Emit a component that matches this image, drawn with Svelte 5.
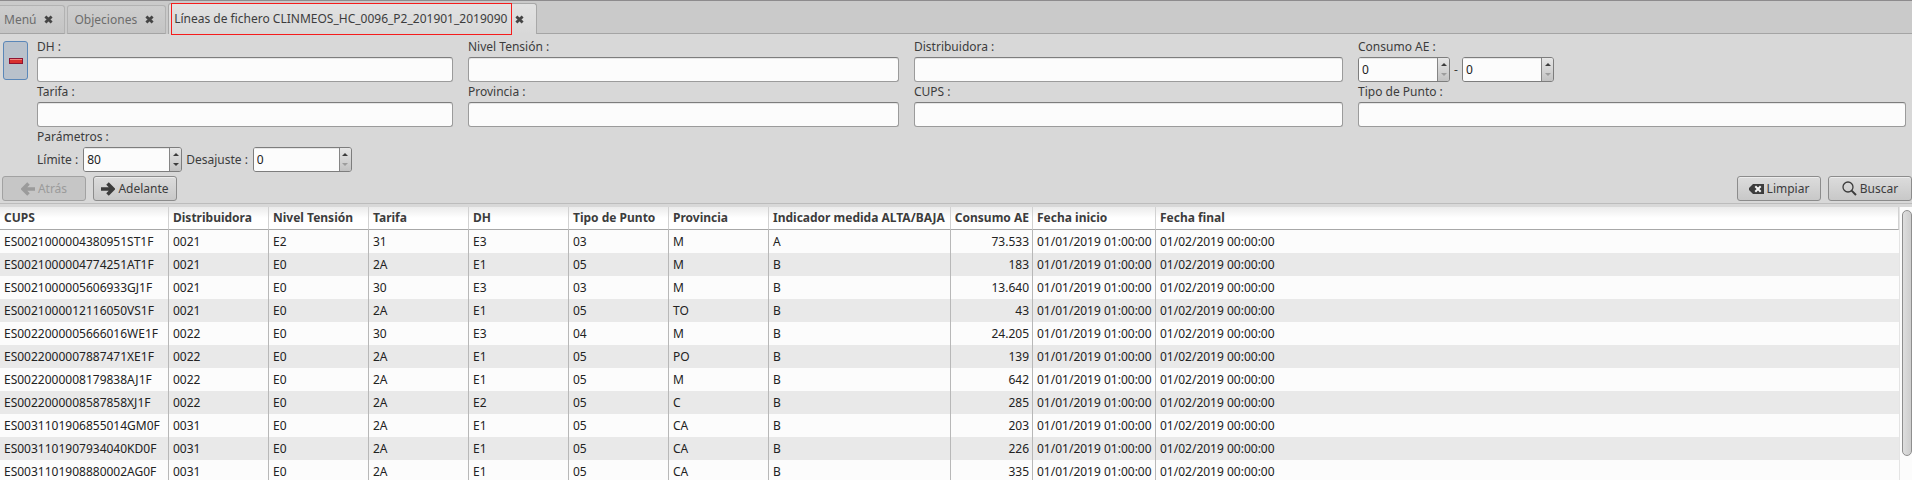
<script>
  const tabs = [
    { label: 'Menú' },
    { label: 'Objeciones' },
    { label: 'Líneas de fichero CLINMEOS_HC_0096_P2_201901_2019090', active: true }
  ];

  const filters = [
    { id: 'dh', label: 'DH :' },
    { id: 'nivel', label: 'Nivel Tensión :' },
    { id: 'distribuidora', label: 'Distribuidora :' },
    { id: 'consumo', label: 'Consumo AE :', range: true },
    { id: 'tarifa', label: 'Tarifa :' },
    { id: 'provincia', label: 'Provincia :' },
    { id: 'cups', label: 'CUPS :' },
    { id: 'tipo', label: 'Tipo de Punto :' }
  ];

  let values = $state({ desde: 0, hasta: 0, limite: 80, desajuste: 0 });

  const columns = [
    { name: 'CUPS', width: 169 },
    { name: 'Distribuidora', width: 100 },
    { name: 'Nivel Tensión', width: 100 },
    { name: 'Tarifa', width: 100 },
    { name: 'DH', width: 100 },
    { name: 'Tipo de Punto', width: 100 },
    { name: 'Provincia', width: 100 },
    { name: 'Indicador medida ALTA/BAJA', width: 182 },
    { name: 'Consumo AE', width: 82 },
    { name: 'Fecha inicio', width: 123 },
    { name: 'Fecha final' }
  ];

  const start = '01/01/2019 01:00:00';
  const end = '01/02/2019 00:00:00';
  const rows = [
    ['ES0021000004380951ST1F', '0021', 'E2', '31', 'E3', '03', 'M', 'A', '73.533'],
    ['ES0021000004774251AT1F', '0021', 'E0', '2A', 'E1', '05', 'M', 'B', '183'],
    ['ES0021000005606933GJ1F', '0021', 'E0', '30', 'E3', '03', 'M', 'B', '13.640'],
    ['ES0021000012116050VS1F', '0021', 'E0', '2A', 'E1', '05', 'TO', 'B', '43'],
    ['ES0022000005666016WE1F', '0022', 'E0', '30', 'E3', '04', 'M', 'B', '24.205'],
    ['ES0022000007887471XE1F', '0022', 'E0', '2A', 'E1', '05', 'PO', 'B', '139'],
    ['ES0022000008179838AJ1F', '0022', 'E0', '2A', 'E1', '05', 'M', 'B', '642'],
    ['ES0022000008587858XJ1F', '0022', 'E0', '2A', 'E2', '05', 'C', 'B', '285'],
    ['ES0031101906855014GM0F', '0031', 'E0', '2A', 'E1', '05', 'CA', 'B', '203'],
    ['ES0031101907934040KD0F', '0031', 'E0', '2A', 'E1', '05', 'CA', 'B', '226'],
    ['ES0031101908880002AG0F', '0031', 'E0', '2A', 'E1', '05', 'CA', 'B', '335']
  ].map((r) => [...r, start, end]);
</script>

{#snippet spin(key, id)}
  <span class="spin" class:wide={key === 'limite' || key === 'desajuste'}>
    <input type="number" min="0" {id} aria-label={key} bind:value={values[key]} />
    <span class="steps">
      <button type="button" aria-label="+" onclick={() => values[key]++}>
        <svg width="6" height="3" viewBox="0 0 6 3"><path d="M3 0 6 3H0z" /></svg>
      </button>
      <button type="button" aria-label="-" disabled={values[key] <= 0} onclick={() => values[key]--}>
        <svg width="6" height="3" viewBox="0 0 6 3"><path d="M0 0H6L3 3z" /></svg>
      </button>
    </span>
  </span>
{/snippet}

<div class="app">
  <div class="tabs">
    {#each tabs as tab}
      <div class="tab" class:active={tab.active}>
        <button type="button" class="name">{tab.label}</button>
        <button type="button" class="close" aria-label="x">
          <svg width="9" height="9" viewBox="0 0 9 9"><path d="M1.4 1.4 7.6 7.6M7.6 1.4 1.4 7.6" /></svg>
        </button>
      </div>
    {/each}
    <div class="fill"></div>
  </div>

  <form class="search" onsubmit={(e) => e.preventDefault()}>
    <button type="button" class="toggle" aria-label="-">
      <svg width="14" height="6" viewBox="0 0 14 6">
        <rect width="14" height="6" fill="#8f1432" />
        <rect x="1" y="1" width="12" height="4" fill="#d8302f" />
        <rect x="1" y="1" width="12" height="1" fill="#ee8580" />
      </svg>
    </button>
    <div class="fields">
      <div class="grid">
        {#each filters as f}
          <div class="field">
            <label for={f.id}>{f.label}</label>
            {#if f.range}
              <div class="range">
                {@render spin('desde', f.id)}
                <span class="dash">-</span>
                {@render spin('hasta', 'hasta')}
              </div>
            {:else}
              <input type="text" id={f.id} />
            {/if}
          </div>
        {/each}
      </div>
      <div class="caption">Parámetros :</div>
      <div class="params">
        <label for="limite">Límite :</label>
        {@render spin('limite', 'limite')}
        <label for="desajuste" class="second">Desajuste :</label>
        {@render spin('desajuste', 'desajuste')}
      </div>
    </div>
  </form>

  <div class="actions">
    <button type="button" class="btn" disabled>
      <svg width="14" height="14" viewBox="0 0 14 14"><path d="M7.5 1.5 2 7l5.500 5.500M2 7h12" fill="none" stroke="currentColor" stroke-width="3.600" /></svg>
      Atrás
    </button>
    <button type="button" class="btn">
      <svg width="14" height="14" viewBox="0 0 14 14"><path d="M6.500 1.500 12 7l-5.500 5.500M12 7H0" fill="none" stroke="currentColor" stroke-width="3.600" /></svg>
      Adelante
    </button>
    <span class="gap"></span>
    <button type="button" class="btn clear">
      <svg width="15" height="10" viewBox="0 0 15 10">
        <path d="M4 0H15V10H4L0 6V4z" fill="currentColor" />
        <path d="M6.300 2.300 11.700 7.700M11.700 2.300 6.300 7.700" stroke="#f4f4f4" stroke-width="2" />
      </svg>
      Limpiar
    </button>
    <button type="button" class="btn">
      <svg width="15" height="15" viewBox="0 0 15 15" fill="none" stroke="currentColor">
        <circle cx="6" cy="6" r="5" stroke-width="1.300" />
        <path d="M9.600 9.600 14 14" stroke-width="2" />
      </svg>
      Buscar
    </button>
  </div>

  <div class="results">
    <div class="view">
      <table>
        <colgroup>
          {#each columns as c}
            <col style:width={c.width ? `${c.width}px` : 'auto'} />
          {/each}
        </colgroup>
        <thead>
          <tr>
            {#each columns as c, i}
              <th class:num={i === 8}>{c.name}</th>
            {/each}
          </tr>
        </thead>
        <tbody>
          {#each rows as r}
            <tr>
              {#each r as cell, i}
                <td class:num={i === 8}>{cell}</td>
              {/each}
            </tr>
          {/each}
        </tbody>
      </table>
    </div>
    <div class="scroll"><div class="thumb"></div></div>
  </div>
</div>

<style>
  :global(body) {
    background: #d8d8d8;
  }
  .app {
    display: flex;
    flex-direction: column;
    height: 100vh;
    overflow: hidden;
    box-sizing: border-box;
    border-top: 1px solid #8d8b8d;
    background: #d8d8d8;
    color: #3c3c3c;
    font: 12px/16px 'Noto Sans', sans-serif;
  }
  .app * {
    box-sizing: border-box;
  }
  button,
  input {
    margin: 0;
    font: inherit;
    color: inherit;
  }
  svg {
    display: block;
    flex: none;
  }

  .tabs {
    display: flex;
    align-items: flex-end;
    flex: none;
    height: 33px;
    background: #cacaca;
  }
  .tab {
    display: flex;
    align-items: center;
    gap: 8px;
    height: 29px;
    margin-right: 2px;
    padding: 0 11px 0 6px;
    border: 1px solid #b2b2b2;
    border-bottom-color: #a4a4a4;
    border-radius: 3px 3px 0 0;
    background: linear-gradient(#cecece, #c4c4c4);
    color: #6c6c6c;
    white-space: nowrap;
  }
  .tab:first-child {
    padding-left: 4px;
    border-left: 0;
    border-top-left-radius: 0;
  }
  .tab.active {
    height: 31px;
    margin-right: 0;
    padding: 0 12px 0 2px;
    gap: 3px;
    border-color: #a8a8a8;
    border-bottom: 0;
    background: linear-gradient(#e2e2e2, #d8d8d8);
    color: #3c3c3c;
  }
  .tab button {
    padding: 0;
    border: 0;
    background: none;
  }
  .tab.active .name {
    height: 32px;
    padding: 0 4px 1px 2px;
    border: 1px solid #f51c1c;
  }
  .close path {
    stroke: #454545;
    stroke-width: 2.8;
  }
  .fill {
    flex: 1;
    align-self: stretch;
    border-bottom: 1px solid #a4a4a4;
  }

  .search {
    display: flex;
    flex: none;
    gap: 9px;
    padding: 4px 6px 0 3px;
  }
  .toggle {
    display: flex;
    flex: none;
    align-items: center;
    justify-content: center;
    width: 25px;
    height: 39px;
    margin-top: 3px;
    padding: 0;
    border: 1px solid #5b87b8;
    border-radius: 3px;
    background: #b9c1cb;
  }
  .fields {
    flex: 1;
    min-width: 0;
  }
  .grid {
    display: grid;
    grid-template-columns: 416fr 431fr 429fr 548fr;
    column-gap: 15px;
  }
  .field {
    display: flex;
    flex-direction: column;
    min-width: 0;
    height: 45px;
  }
  .field label,
  .caption {
    height: 19px;
    line-height: 18px;
  }
  input {
    width: 100%;
    height: 25px;
    padding: 0 3px;
    outline: 0;
    border: 1px solid #9b9b9b;
    border-top-color: #7d7d7d;
    border-radius: 3px;
    background: #fcfcfc;
    box-shadow: inset 0 1px #e6e6e6;
    color: #222;
  }
  .range,
  .params {
    display: flex;
    align-items: center;
  }
  .dash {
    width: 12px;
    text-align: center;
  }
  .params label {
    margin-right: 5px;
  }
  .params .second {
    margin-left: 4px;
  }
  .spin {
    display: flex;
    width: 92px;
    height: 25px;
    border: 1px solid #7d7d7d;
    border-radius: 3px;
    overflow: hidden;
  }
  .spin.wide {
    width: 99px;
  }
  .spin input {
    flex: 1;
    width: 0;
    height: 23px;
    border: 0;
    border-radius: 0;
    appearance: textfield;
  }
  .spin input::-webkit-inner-spin-button {
    appearance: none;
    margin: 0;
  }
  .steps {
    display: flex;
    flex-direction: column;
    width: 12px;
    padding: 2px 0;
    border-left: 1px solid #858585;
    background: linear-gradient(#e6e6e6, #c2c2c2);
  }
  .steps button {
    display: flex;
    flex: 1;
    align-items: center;
    justify-content: center;
    padding: 0;
    border: 0;
    background: none;
    fill: #3c3c3c;
  }
  .steps button:disabled {
    fill: #9c9c9c;
  }

  .actions {
    display: flex;
    flex: none;
    gap: 7px;
    height: 32px;
    padding: 4px 0 0 2px;
    border-bottom: 1px solid #bcbcbc;
  }
  .gap {
    flex: 1;
  }
  .btn {
    display: flex;
    align-items: center;
    justify-content: center;
    gap: 3px;
    width: 84px;
    height: 25px;
    padding: 0;
    border: 1px solid #8c8c8c;
    border-radius: 3px;
    background: linear-gradient(#dcdcdc, #c8c8c8);
    box-shadow: inset 0 1px #ececec;
  }
  .btn:disabled {
    border-color: #a2a2a2;
    background: #c6c6c6;
    box-shadow: none;
    color: #9b9b9b;
  }

  .results {
    display: flex;
    flex: 1;
    min-height: 0;
    margin-top: 3px;
    background: #fcfcfc;
  }
  .view {
    flex: 1;
    min-width: 0;
    overflow: hidden;
    border-right: 1px solid #e4e4e4;
  }
  table {
    width: 100%;
    table-layout: fixed;
    border-collapse: separate;
    border-spacing: 0;
  }
  th,
  td {
    height: 23px;
    padding: 0 3px 0 4px;
    border-right: 1px solid #b8b8b8;
    text-align: left;
    white-space: nowrap;
  }
  th {
    border-color: #d2d2d2;
    border-bottom: 1px solid #a8a8a8;
    background: linear-gradient(#ebebeb, #fff 50%);
    font-weight: 700;
  }
  td {
    color: #222;
  }
  td:last-child {
    border-right: 0;
  }
  tbody tr:nth-child(even) {
    background: #e9e9e9;
  }
  .num {
    padding-left: 0;
    text-align: right;
  }
  .scroll {
    width: 12px;
    padding: 3px 0 0 2px;
  }
  .thumb {
    height: 91%;
    border: 1px solid #8e8e8e;
    border-radius: 5px;
    background: linear-gradient(90deg, #dedede, #cdcdcd);
  }
</style>
